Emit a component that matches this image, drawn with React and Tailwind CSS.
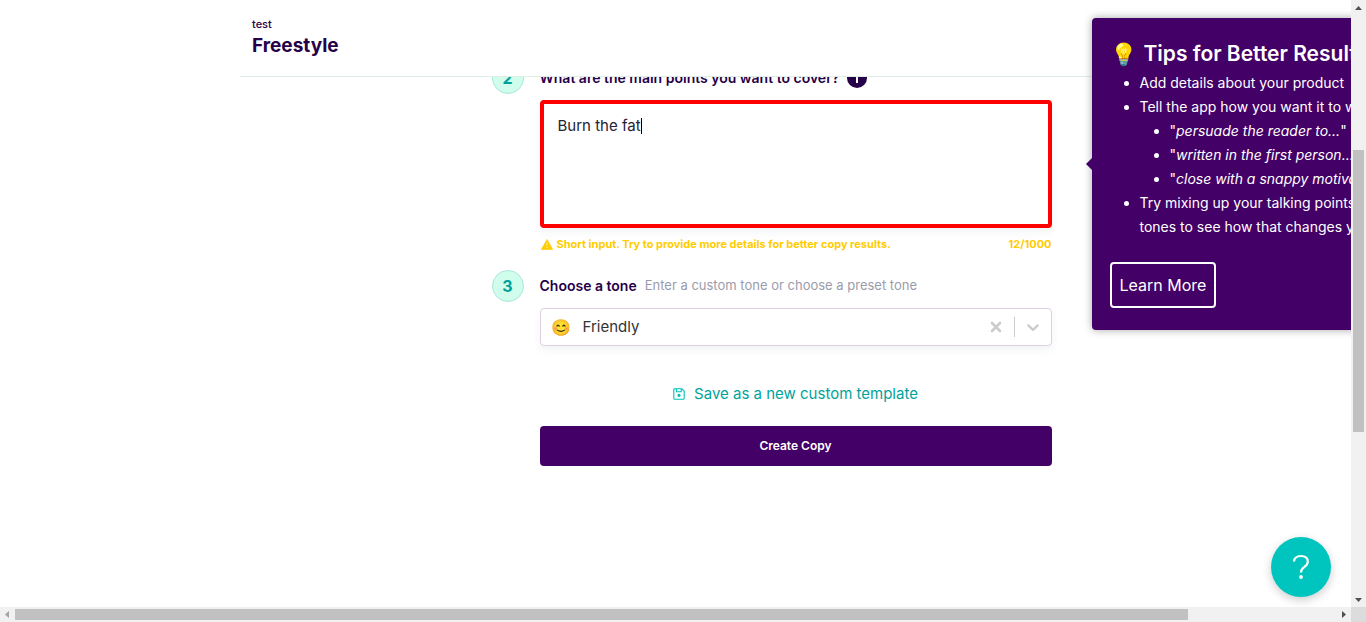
import { useState } from "react";

function StepBadge({ children }) {
  return (
    <span className="flex size-8 shrink-0 items-center justify-center rounded-full border border-[#aae6e0] bg-[#d1fdec] text-base font-bold text-[#00a39b]">
      {children}
    </span>
  );
}

function WarningIcon() {
  return (
    <svg viewBox="0 0 12 11" className="h-[11px] w-3 shrink-0" aria-hidden="true">
      <path d="M6 .4 11.8 10.6H.2Z" fill="#ffcc00" stroke="#ffcc00" strokeWidth=".6" strokeLinejoin="round" />
      <path d="M6 3.6v3.4M6 8v1.2" stroke="#fff" strokeWidth="1.1" opacity=".6" />
    </svg>
  );
}

function SaveIcon() {
  return (
    <svg viewBox="0 0 12 12" className="size-3 shrink-0" fill="none" stroke="#00c4bd" strokeWidth="1.1" aria-hidden="true">
      <path d="M1.5.8h7.3l2.4 2.3v7.1a1 1 0 0 1-1 1H1.8a1 1 0 0 1-1-1V1.5a.7.7 0 0 1 .7-.7Z" />
      <path d="M3.4.8v3h4.8v-3" />
      <circle cx="6" cy="7.3" r="1.1" fill="#00c4bd" />
    </svg>
  );
}

function Arrow({ d, muted }) {
  return (
    <svg viewBox="0 0 15 15" className="size-[15px] shrink-0" aria-hidden="true">
      <path d={d} fill={muted ? "#a3a3a3" : "#505050"} />
    </svg>
  );
}

function TipsPanel() {
  return (
    <aside className="absolute left-full top-[18px] z-20 ml-10 w-[370px] rounded bg-[#430066] p-[18px] pb-[22px] text-sm leading-6 text-white shadow-[0_0_8px_rgba(0,0,0,0.35)]">
      <span className="absolute -left-[6px] top-[140px] border-y-[6px] border-r-[6px] border-y-transparent border-r-[#430066]" />
      <h2 className="flex h-[35px] items-center gap-[6px] whitespace-nowrap text-[21px] font-semibold">
        <span className="flex w-7 justify-center text-[22px]">💡</span>
        Tips for Better Results
      </h2>
      <ul className="list-disc whitespace-nowrap pl-[30px]">
        <li>Add details about your product</li>
        <li>
          Tell the app how you want it to write
          <ul className="list-disc pl-[30px]">
            <li>"<em>persuade the reader to...</em>"</li>
            <li>"<em>written in the first person...</em>"</li>
            <li>"<em>close with a snappy motivation</em>"</li>
          </ul>
        </li>
        <li>
          Try mixing up your talking points and
          <br />
          tones to see how that changes your copy
        </li>
      </ul>
      <a href="#learn" className="mt-[23px] inline-flex h-[46px] items-center rounded border-2 border-white px-2 text-base">
        Learn More
      </a>
    </aside>
  );
}

export default function App() {
  const [points, setPoints] = useState("Burn the fat");
  const [tone, setTone] = useState("Friendly");

  return (
    <div className="grid h-screen grid-cols-[1fr_15px] grid-rows-[1fr_15px] overflow-hidden bg-white font-['Inter',sans-serif] text-[#260048]">
      <div className="flex min-w-0 overflow-hidden pl-60">
        <div className="relative flex min-w-0 flex-1 flex-col">
          <header className="flex h-[77px] shrink-0 flex-col border-b border-[#dcefe2] px-3 pt-4">
            <span className="text-[11px] leading-4 font-medium">test</span>
            <h1 className="text-[19px] leading-7 font-bold">Freestyle</h1>
          </header>

          <div className="absolute inset-x-0 top-0 flex justify-center">
            <div className="relative w-lg">
              <TipsPanel />
            </div>
          </div>

          <main className="flex min-h-0 flex-1 justify-center overflow-hidden">
            <form className="-mt-[15px] flex w-[608px] flex-col pr-12" onSubmit={(e) => e.preventDefault()}>
              <div className="flex items-center gap-4">
                <StepBadge>2</StepBadge>
                <label htmlFor="points" className="text-sm font-semibold">What are the main points you want to cover?</label>
                <span className="-ml-2 flex size-5 items-center justify-center rounded-full bg-[#260048] text-white">
                  <svg viewBox="0 0 20 20" className="size-5" fill="#fff" aria-hidden="true"><path d="M9 5h2v2H9zM9 8.500h2V15H9z" /></svg>
                </span>
              </div>
              <div className="relative mt-[6px] ml-12 h-32">
                <textarea
                  id="points"
                  value={points}
                  onChange={(e) => setPoints(e.target.value)}
                  className="block h-full w-full resize-none rounded border-4 border-[#ff0000] px-[14px] py-[10px] text-[15px] leading-6 text-[#252233] shadow-[0_4px_8px_rgba(0,60,60,0.06)] outline-none"
                />
                <span className="pointer-events-none absolute left-0 top-[18px] flex pl-[18px] text-[15px]" aria-hidden="true">
                  <span className="h-4 w-[84px] border-r border-black" />
                </span>
              </div>
              <div className="mt-2 ml-12 flex h-4 items-center justify-between text-[11px] font-bold text-[#ffcc00]">
                <span className="flex items-center gap-1 pl-px"><WarningIcon />Short input. Try to provide more details for better copy results.</span>
                <span>12/1000</span>
              </div>
              <div className="mt-[18px] flex items-center gap-4">
                <StepBadge>3</StepBadge>
                <label htmlFor="tone" className="text-sm font-semibold">Choose a tone</label>
                <span className="-ml-2 text-[13px] text-[#9a9cab]">Enter a custom tone or choose a preset tone</span>
              </div>
              <div className="mt-[6px] ml-12 flex h-[38px] items-center rounded border border-[#dccfe6] pl-[10px] text-[15px] text-[#333] shadow-[0_4px_8px_rgba(0,60,60,0.06)]">
                <span className="w-8 text-base">😊</span>
                <select id="tone" value={tone} onChange={(e) => setTone(e.target.value)} className="h-full flex-1 appearance-none bg-transparent outline-none">
                  <option>Friendly</option>
                </select>
                <button type="button" aria-label="Clear tone" className="flex size-9 items-center justify-center">
                  <svg viewBox="0 0 20 20" className="size-5" stroke="#ccc" strokeWidth="2.6" strokeLinecap="round"><path d="m6 6 8 8m0-8-8 8" /></svg>
                </button>
                <span className="h-5 w-px bg-[#ccc]" />
                <span className="flex size-9 items-center justify-center">
                  <svg viewBox="0 0 20 20" className="size-5" fill="#ccc"><path d="M4.516 7.548c.436-.446 1.043-.481 1.576 0L10 11.295l3.908-3.747c.533-.481 1.141-.446 1.574 0 .436.445.408 1.197 0 1.615-.406.418-4.695 4.502-4.695 4.502a1.095 1.095 0 0 1-1.576 0S4.924 9.581 4.516 9.163s-.436-1.17 0-1.615z" /></svg>
                </span>
              </div>
              <button type="button" className="mt-9 ml-12 flex h-6 items-center justify-center gap-[9px] text-[15px] text-[#00a39b]">
                <SaveIcon />
                Save as a new custom template
              </button>
              <button type="submit" className="mt-5 ml-12 h-10 rounded bg-[#430066] text-xs font-semibold text-white">
                Create Copy
              </button>
            </form>
          </main>

          <button type="button" aria-label="Help" className="absolute right-5 bottom-[10px] flex size-15 items-center justify-center rounded-full bg-[#00c5be] shadow-[0_3px_10px_rgba(0,0,0,0.2)]">
            <svg viewBox="0 0 18 26" className="h-[26px] w-[18px]" fill="none" stroke="#fff" strokeWidth="2.200" aria-hidden="true">
              <path d="M2 7.500C2.300 3.800 5 2 9 2c4.200 0 6.800 2.200 6.800 5.600 0 2.800-1.600 4.200-3.600 5.500C9.900 14.600 9 15.600 9 18.500" />
              <circle cx="9" cy="23" r="1.900" fill="#fff" stroke="none" />
            </svg>
          </button>
        </div>
      </div>

      <div className="flex flex-col items-center bg-[#f1f1f1]" aria-hidden="true">
        <Arrow d="M4 10h7L7.500 6Z" />
        <div className="flex min-h-0 w-[11px] flex-1 flex-col">
          <div className="grow-[135]" />
          <div className="grow-[282] bg-[#c1c1c1]" />
          <div className="grow-[160]" />
        </div>
        <Arrow d="M4 6h7l-3.500 4Z" />
      </div>
      <div className="flex items-center bg-[#f1f1f1]" aria-hidden="true">
        <Arrow d="M9 4v7L5 7.500Z" muted />
        <div className="flex h-[11px] min-w-0 flex-1">
          <div className="grow-[1173] bg-[#c1c1c1]" />
          <div className="grow-[148]" />
        </div>
        <Arrow d="M6 4v7l4-3.500Z" />
      </div>
      <div className="bg-[#dcdcdc]" />
    </div>
  );
}
